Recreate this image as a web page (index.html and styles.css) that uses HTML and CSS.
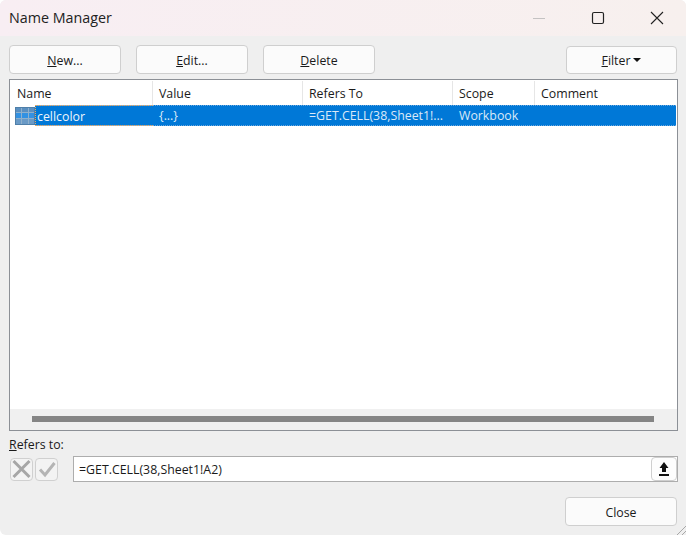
FILE: index.html
```html
<!DOCTYPE html>
<html lang="en">
<head>
<meta charset="utf-8">
<title>Name Manager</title>
<link rel="stylesheet" href="styles.css">
</head>
<body>
<div class="window">
  <header class="titlebar">
    <div class="title">Name Manager</div>
    <div class="controls">
      <svg class="ctl" width="14" height="14" viewBox="0 0 14 14"><path d="M1 7.5h12" stroke="#c4c2c2" fill="none"/></svg>
      <svg class="ctl" width="14" height="14" viewBox="0 0 14 14"><rect x="1.5" y="1.5" width="11" height="11" rx="1.5" stroke="#222" stroke-width="1.2" fill="none"/></svg>
      <svg class="ctl" width="14" height="14" viewBox="0 0 14 14"><path d="M1 1l12 12M13 1L1 13" stroke="#222" stroke-width="1.1" fill="none"/></svg>
    </div>
  </header>
  <main class="content">
    <div class="toolbar">
      <button class="btn"><u>N</u>ew...</button>
      <button class="btn"><u>E</u>dit...</button>
      <button class="btn"><u>D</u>elete</button>
      <button class="btn btn-filter"><span><u>F</u>ilter</span><i class="caret"></i></button>
    </div>
    <section class="list">
      <div class="grid head">
        <div class="hc">Name</div>
        <div class="hc">Value</div>
        <div class="hc">Refers To</div>
        <div class="hc">Scope</div>
        <div class="hc last">Comment</div>
      </div>
      <div class="row">
        <svg class="tableicon" width="20" height="18" viewBox="0 0 20 18">
          <rect width="20" height="18" fill="#4f7fa9"/>
          <rect x="1" y="1" width="5" height="4" fill="#5a8fc0"/>
          <rect x="7" y="1" width="6" height="4" fill="#5a8fc0"/>
          <rect x="14" y="1" width="5" height="4" fill="#5a8fc0"/>
          <rect x="1" y="6" width="5" height="5" fill="#3291e2"/>
          <rect x="7" y="6" width="6" height="5" fill="#3291e2"/>
          <rect x="14" y="6" width="5" height="5" fill="#3291e2"/>
          <rect x="1" y="12" width="5" height="5" fill="#6a9ac6"/>
          <rect x="7" y="12" width="6" height="5" fill="#6a9ac6"/>
          <rect x="14" y="12" width="5" height="5" fill="#6a9ac6"/>
          <path d="M1 5.500h18M1 11.500h18M6.500 1v16M13.500 1v16" stroke="#8fb0cc" stroke-width="1" fill="none"/>
        </svg>
        <div class="rowcells">
          <div class="cell selname">cellcolor</div>
          <div class="cell">{...}</div>
          <div class="cell">=GET.CELL(38,Sheet1!...</div>
          <div class="cell">Workbook</div>
          <div class="cell"></div>
        </div>
      </div>
      <div class="spacer"></div>
      <div class="hscroll"><div class="thumb"></div></div>
    </section>
    <div class="label"><u>R</u>efers to:</div>
    <div class="refers">
      <div class="iconbtn">
        <svg width="22" height="22" viewBox="0 0 22 22"><path d="M2.500 3l16 16M18.500 3l-16 16" stroke="#a6a6a6" stroke-width="3" fill="none"/></svg>
      </div>
      <div class="iconbtn">
        <svg width="22" height="22" viewBox="0 0 22 22"><path d="M4 11.500l5 5.500 9.500-12" stroke="#b4b4b4" stroke-width="3" fill="none"/></svg>
      </div>
      <div class="input">
        <span class="formula">=GET.CELL(38,Sheet1!A2)</span>
        <button class="collapse">
          <svg width="12" height="14" viewBox="0 0 12 14"><path d="M6 0L10.500 6H8V10H4V6H1.500z M1 12h10v2H1z" fill="#111"/></svg>
        </button>
      </div>
    </div>
    <div class="footer"><button class="btn btn-close">Close</button></div>
  </main>
  <svg class="grip" width="12" height="12" viewBox="0 0 12 12"><path d="M3 12l9-9M8 12l4-4" stroke="#a8a8a8" fill="none"/></svg>
</div>
</body>
</html>
```
FILE: styles.css
```css
* { box-sizing: border-box; }
html, body { margin: 0; padding: 0; background: #fff; }
body { font-family: "Open Sans", "Noto Sans", sans-serif; font-size: 12.35px; color: #1a1a1a; }
.window {
  position: relative;
  width: 686px;
  height: 535px;
  background: #efefef;
  border-radius: 6px 6px 0 6px;
  overflow: hidden;
  display: flex;
  flex-direction: column;
}
.titlebar {
  height: 36px;
  flex: none;
  background: linear-gradient(90deg, #f8eef3, #f7f0ee);
  display: flex;
  align-items: center;
  justify-content: space-between;
  padding: 0 22px 1px 9px;
}
.title { font-size: 14.3px; color: #222; }
.controls { display: flex; gap: 45px; }
.ctl { display: block; }
.content { flex: 1; padding: 9px 8px 0 9px; display: flex; flex-direction: column; }
.toolbar { display: flex; gap: 15px; height: 29px; padding-right: 1px; }
.btn {
  width: 112px;
  height: 29px;
  padding: 1px 0 0;
  font: inherit;
  color: #1a1a1a;
  background: #fbfbfb;
  border: 1px solid #cfcfcf;
  border-radius: 4px;
}
.btn-filter {
  margin-left: auto;
  margin-top: 1px;
  height: 28px;
  width: 111px;
  padding-top: 0;
  display: flex;
  align-items: center;
  justify-content: center;
  gap: 3px;
}
.caret { width: 0; height: 0; border-left: 4px solid transparent; border-right: 4px solid transparent; border-top: 4px solid #111; }
.list {
  margin-top: 5px;
  height: 352px;
  border: 1px solid #8c9096;
  background: #fff;
  display: flex;
  flex-direction: column;
}
.grid { display: grid; grid-template-columns: 143px 150px 150px 82px 1fr; }
.head { height: 25px; align-items: stretch; }
.hc { padding: 4px 0 0 6px; border-right: 1px solid #e6e6e6; margin-top: 1px; }
.hc:first-child { padding-left: 7px; }
.hc.last { border-right: 0; }
.row { height: 21px; margin: 0 1px 0 5px; display: flex; align-items: center; }
.tableicon { flex: none; display: block; }
.rowcells {
  flex: 1;
  height: 21px;
  display: grid;
  grid-template-columns: 118px 150px 150px 82px 1fr;
  background: #0078d7;
  border-top: 1px dotted #6fa8dc;
  border-bottom: 1px dotted #6fa8dc;
  color: #dbe9f7;
}
.cell { line-height: 20px; padding-left: 6px; white-space: nowrap; overflow: hidden; }
.cell.selname {
  padding-left: 1px;
  margin: -1px 0;
  line-height: 21px;
  border: 1px dotted #e8a860;
  border-right: 0;
  color: #eef5fc;
}
.spacer { flex: 1; }
.hscroll { height: 21px; background: #f0f0f0; padding: 7px 23px 0 22px; }
.thumb { height: 6px; background: #858585; }
.label { margin-top: 5px; height: 17px; line-height: 17px; }
.refers { margin-top: 3px; display: flex; align-items: center; height: 26px; }
.iconbtn {
  width: 23px;
  height: 23px;
  margin-left: 1px;
  margin-right: 1px;
  border: 1px solid #d0d0d0;
  border-radius: 4px;
  background: #f3f3f3;
  display: flex;
  align-items: center;
  justify-content: center;
}
.iconbtn svg { flex: none; }
.input {
  margin-left: 14px;
  flex: 1;
  height: 26px;
  border: 1px solid #adadad;
  background: #fff;
  display: flex;
  align-items: center;
  justify-content: space-between;
  padding-left: 5px;
}
.collapse {
  width: 26px;
  height: 24px;
  padding: 0;
  background: #fdfdfd;
  border: 1px solid #cfcfcf;
  border-radius: 4px;
  display: flex;
  align-items: center;
  justify-content: center;
}
.footer { margin-top: 15px; display: flex; justify-content: flex-end; padding-right: 1px; }
.btn-close { width: 112px; }
.grip { position: absolute; right: 0; bottom: 0; }
```
